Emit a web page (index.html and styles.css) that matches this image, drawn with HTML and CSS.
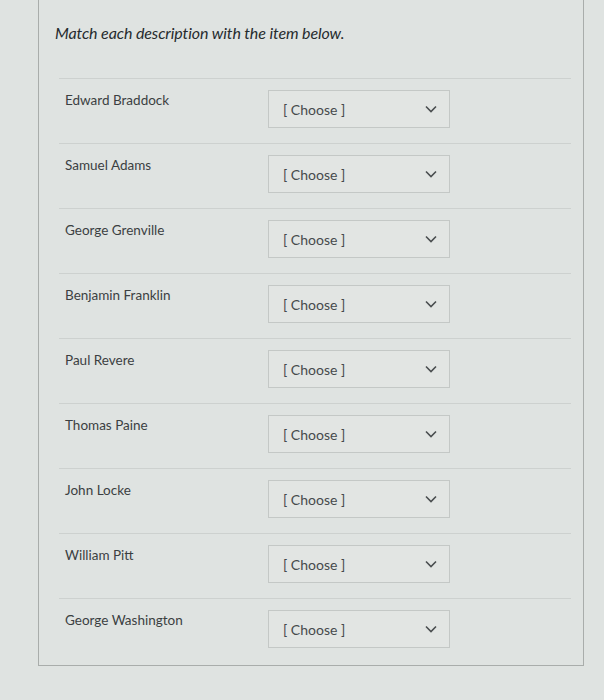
FILE: index.html
```html
<!DOCTYPE html>
<html>
<head>
<meta charset="utf-8">
<link rel="stylesheet" href="styles.css">
</head>
<body>
<div class="question">
  <div class="title">Match each description with the item below.</div>
  <div class="rows">
    <div class="row"><div class="label">Edward Braddock</div><div class="select"><span>[ Choose ]</span><svg class="chev" viewBox="0 0 12 8"><path d="M1 1.5 L6 6.5 L11 1.5"/></svg></div></div>
    <div class="row"><div class="label">Samuel Adams</div><div class="select"><span>[ Choose ]</span><svg class="chev" viewBox="0 0 12 8"><path d="M1 1.5 L6 6.5 L11 1.5"/></svg></div></div>
    <div class="row"><div class="label">George Grenville</div><div class="select"><span>[ Choose ]</span><svg class="chev" viewBox="0 0 12 8"><path d="M1 1.5 L6 6.5 L11 1.5"/></svg></div></div>
    <div class="row"><div class="label">Benjamin Franklin</div><div class="select"><span>[ Choose ]</span><svg class="chev" viewBox="0 0 12 8"><path d="M1 1.5 L6 6.5 L11 1.5"/></svg></div></div>
    <div class="row"><div class="label">Paul Revere</div><div class="select"><span>[ Choose ]</span><svg class="chev" viewBox="0 0 12 8"><path d="M1 1.5 L6 6.5 L11 1.5"/></svg></div></div>
    <div class="row"><div class="label">Thomas Paine</div><div class="select"><span>[ Choose ]</span><svg class="chev" viewBox="0 0 12 8"><path d="M1 1.5 L6 6.5 L11 1.5"/></svg></div></div>
    <div class="row"><div class="label">John Locke</div><div class="select"><span>[ Choose ]</span><svg class="chev" viewBox="0 0 12 8"><path d="M1 1.5 L6 6.5 L11 1.5"/></svg></div></div>
    <div class="row"><div class="label">William Pitt</div><div class="select"><span>[ Choose ]</span><svg class="chev" viewBox="0 0 12 8"><path d="M1 1.5 L6 6.5 L11 1.5"/></svg></div></div>
    <div class="row"><div class="label">George Washington</div><div class="select"><span>[ Choose ]</span><svg class="chev" viewBox="0 0 12 8"><path d="M1 1.5 L6 6.5 L11 1.5"/></svg></div></div>
  </div>
</div>
</body>
</html>
```
FILE: styles.css
```css
html, body {
  margin: 0;
  padding: 0;
  background: #dfe3e1;
  font-family: Lato, "Liberation Sans", sans-serif;
}
.question {
  margin: -1px 0 0 38px;
  width: 546px;
  height: 667px;
  box-sizing: border-box;
  border: 1px solid #a9adab;
  padding: 0 12px 0 20px;
}
.title {
  font-style: italic;
  font-size: 16px;
  line-height: 20px;
  color: #262b2e;
  padding: 23px 0 0 0;
  margin-left: -4px;
  height: 55px;
  letter-spacing: -0.1px;
}
.row {
  display: flex;
  height: 65px;
  box-sizing: border-box;
  border-top: 1px solid #cdd1cf;
}
.label {
  width: 203px;
  padding: 13px 0 0 6px;
  font-size: 13.5px;
  line-height: 16px;
  color: #3b3f41;
}
.select {
  margin-top: 11px;
  width: 182px;
  height: 38px;
  box-sizing: border-box;
  border: 1px solid #c4c8c6;
  background: #e2e5e3;
  display: flex;
  align-items: center;
  justify-content: space-between;
  padding: 0 12px 0 14px;
  font-size: 14px;
  color: #464a4c;
}
.chev {
  width: 12px;
  height: 8px;
}
.chev path {
  fill: none;
  stroke: #4a4e50;
  stroke-width: 1.6;
}
```
